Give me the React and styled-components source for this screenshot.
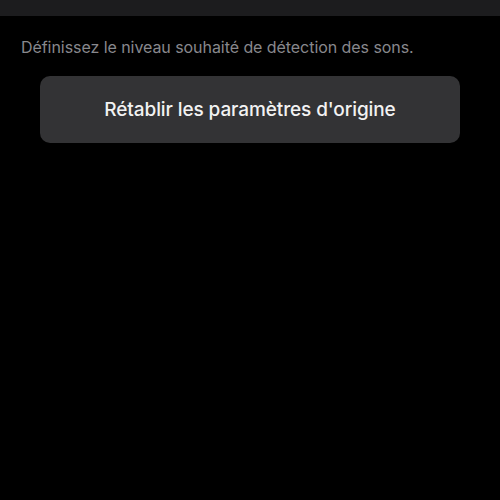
import styled, { createGlobalStyle } from "styled-components";

const GlobalStyle = createGlobalStyle`
  html, body {
    margin: 0;
    padding: 0;
    background: #000;
  }
  body {
    font-family: "Inter", "Roboto", "Liberation Sans", sans-serif;
  }
`;

const Page = styled.div`
  width: 500px;
  height: 500px;
  background: #000;
  display: flex;
  flex-direction: column;
`;

const TopBar = styled.div`
  height: 16px;
  background: #1c1c1e;
`;

const Content = styled.div`
  display: flex;
  flex-direction: column;
  padding: 20px 21px 0;
`;

const Hint = styled.p`
  margin: 0;
  font-size: 16px;
  line-height: 22px;
  color: #88888d;
  letter-spacing: -0.06px;
`;

const ResetButton = styled.button`
  margin: 18px 19px 0;
  height: 67px;
  border: none;
  border-radius: 10px;
  background: #333335;
  color: #f2f2f2;
  font-family: inherit;
  font-size: 19px;
  font-weight: 500;
  letter-spacing: -0.1px;
`;

function App() {
  return (
    <>
      <GlobalStyle />
      <Page>
        <TopBar />
        <Content>
          <Hint>Définissez le niveau souhaité de détection des sons.</Hint>
          <ResetButton>Rétablir les paramètres d'origine</ResetButton>
        </Content>
      </Page>
    </>
  );
}

export default App;
